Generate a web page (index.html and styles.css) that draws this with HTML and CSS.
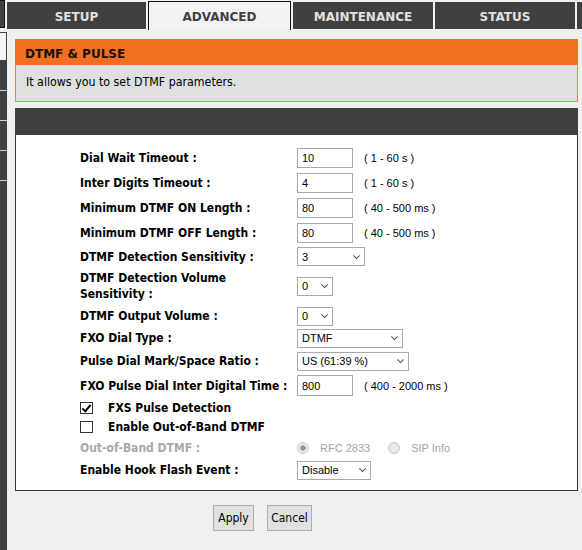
FILE: index.html
```html
<!DOCTYPE html>
<html lang="en">
<head>
  <meta charset="UTF-8">
  <title>DTMF &amp; Pulse</title>
  <link rel="stylesheet" href="styles.css">
</head>
<body>
<div class="page">
  <aside class="side">
    <div class="side-top"></div>
    <div class="side-item active"></div>
    <div class="side-item"></div>
    <div class="side-item"></div>
    <div class="side-item"></div>
    <div class="side-item"></div>
    <div class="side-rest"></div>
  </aside>

  <main class="main">
    <nav class="tabs">
      <div class="tab">SETUP</div>
      <div class="tab active">ADVANCED</div>
      <div class="tab">MAINTENANCE</div>
      <div class="tab">STATUS</div>
      <div class="tab"></div>
    </nav>

    <section class="intro">
      <h2>DTMF &amp; PULSE</h2>
      <p>It allows you to set DTMF parameters.</p>
    </section>

    <section class="box">
      <div class="box-head"></div>
      <div class="form">
        <label>Dial Wait Timeout :</label>
        <div class="ctl"><input type="text" value="10"><span class="hint">( 1 - 60 s )</span></div>

        <label>Inter Digits Timeout :</label>
        <div class="ctl"><input type="text" value="4"><span class="hint">( 1 - 60 s )</span></div>

        <label>Minimum DTMF ON Length :</label>
        <div class="ctl"><input type="text" value="80"><span class="hint">( 40 - 500 ms )</span></div>

        <label>Minimum DTMF OFF Length :</label>
        <div class="ctl"><input type="text" value="80"><span class="hint">( 40 - 500 ms )</span></div>

        <label>DTMF Detection Sensitivity :</label>
        <div class="ctl"><span class="select"><select class="sel-sens"><option>3</option></select></span></div>

        <label>DTMF Detection Volume Sensitivity :</label>
        <div class="ctl"><span class="select"><select class="sel-num"><option>0</option></select></span></div>

        <label>DTMF Output Volume :</label>
        <div class="ctl"><span class="select"><select class="sel-num"><option>0</option></select></span></div>

        <label>FXO Dial Type :</label>
        <div class="ctl"><span class="select"><select class="sel-type"><option>DTMF</option></select></span></div>

        <label>Pulse Dial Mark/Space Ratio :</label>
        <div class="ctl"><span class="select"><select class="sel-ratio"><option>US (61:39 %)</option></select></span></div>

        <label>FXO Pulse Dial Inter Digital Time :</label>
        <div class="ctl"><input type="text" value="800" class="tall"><span class="hint">( 400 - 2000 ms )</span></div>

        <div class="check"><input type="checkbox" checked><span>FXS Pulse Detection</span></div>
        <div class="check"><input type="checkbox"><span>Enable Out-of-Band DTMF</span></div>

        <label class="off">Out-of-Band DTMF :</label>
        <div class="ctl radios">
          <input type="radio" name="oob" checked disabled><span>RFC 2833</span>
          <input type="radio" name="oob" disabled><span>SIP Info</span>
        </div>

        <label>Enable Hook Flash Event :</label>
        <div class="ctl"><span class="select"><select class="sel-hook"><option>Disable</option></select></span></div>
      </div>
    </section>

    <div class="actions">
      <button class="btn-apply">Apply</button>
      <button class="btn-cancel">Cancel</button>
    </div>
  </main>
</div>
</body>
</html>
```

FILE: styles.css
```css
body { margin: 0; background: #f0f0f0; font-family: "DejaVu Sans Condensed", "Liberation Sans", sans-serif; font-size: 12px; color: #000; }
.page { display: flex; min-height: 550px; }

/* left menu strip (cut off) */
.side { width: 7px; flex-shrink: 0; display: flex; flex-direction: column; }
.side-top { width: 5px; height: 28px; margin-bottom: 4px; background: #404040; border: 1px solid #111; border-left: 0; box-sizing: border-box; }
.side-item { height: 30px; background: #404040; border-bottom: 1px solid #d4d4d4; box-sizing: border-box; }
.side-item.active { height: 29px; background: #f4f4f4; border: 1px solid #444; border-left: 0; }
.side-rest { flex: 1; background: #404040; }

.main { flex: 1; min-width: 0; }

/* top tabs */
.tabs { display: grid; grid-template-columns: 139px 143px 140px 140px 1fr; column-gap: 2px; height: 30px; }
.tab { margin-top: 2px; height: 27px; padding-top: 2px; box-sizing: border-box; background: #404040; color: #e2e2e2; font: bold 12px "DejaVu Sans", sans-serif; display: flex; align-items: center; justify-content: center; }
.tab.active { margin-top: 1px; height: 29px; background: #f3f3f3; color: #404040; border: 1px solid #111; border-bottom: 0; }

/* title block */
.intro { margin: 9px 4px 0 8px; }
.intro h2 { margin: 0; height: 26px; box-sizing: border-box; padding: 8px 10px 0; background: #f26f21; color: #1a1008; font: bold 12px/14px "DejaVu Sans", sans-serif; }
.intro p { margin: 0; height: 37px; box-sizing: border-box; padding: 10px 10px 0; background: #dfdfdf; border: 1px solid #e0875a; border-top: 0; font-size: 12.3px; line-height: 15px; }

/* settings box */
.box { margin: 6px 4px 0 8px; }
.box-head { height: 27px; background: #404040; }
.form { background: #fff; border: 1px solid #333; border-top: 0; padding: 10px 0 10px 64px; display: grid; grid-template-columns: 217px 1fr; grid-template-rows: 25px 25px 25px 25px 23px 36px 24px 20px 26px 23px 21px 18px 24px 20px; align-items: center; }
.form label { font-weight: bold; line-height: 16px; padding-right: 8px; }
.form label.off { color: #a8a8a8; }
.ctl { display: flex; align-items: center; }
.ctl input[type="text"] { width: 56px; height: 20px; box-sizing: border-box; margin: 0; padding: 0 4px; border: 1px solid #a9a9a9; font: 11px "Liberation Sans", sans-serif; color: #000; }
.ctl input.tall { height: 21px; }
.hint { margin-left: 11px; font: 11px "Liberation Sans", sans-serif; }

.select { position: relative; display: inline-flex; }
.select::after { content: ""; position: absolute; right: 6px; top: 50%; width: 4px; height: 4px; border-right: 1.5px solid #555; border-bottom: 1.5px solid #555; transform: translateY(-75%) rotate(45deg); pointer-events: none; }
.select select { appearance: none; -webkit-appearance: none; height: 19px; margin: 0; padding: 0 0 0 4px; border: 1px solid #a9a9a9; border-radius: 0; background: #fff; font: 11px "Liberation Sans", sans-serif; color: #000; }
.sel-num { width: 36px; }
.sel-sens { width: 68px; }
.sel-hook { width: 74px; }
.sel-type { width: 106px; }
.sel-ratio { width: 112px; }

.check { grid-column: 1 / -1; display: flex; align-items: center; gap: 15px; font-weight: bold; }
.check input { appearance: none; -webkit-appearance: none; width: 13px; height: 12px; margin: 0; border: 1px solid #333; background: #fff; position: relative; }
.check input:checked::after { content: ""; position: absolute; left: 3px; top: 0; width: 3px; height: 7px; border-right: 2px solid #000; border-bottom: 2px solid #000; transform: rotate(40deg); }

.radios { color: #a4a4a4; font: 11px "Liberation Sans", sans-serif; }
.radios input { appearance: none; -webkit-appearance: none; width: 12px; height: 12px; margin: 0 11px 0 0; border: 1px solid #c8c8c8; border-radius: 50%; background: #e8e8e8; }
.radios input:checked { background: radial-gradient(circle, #999 0 2.5px, #e8e8e8 3px); }
.radios span { margin-right: 18px; }

/* buttons */
.actions { margin: 14px 0 0 206px; display: flex; gap: 13px; }
.actions button { height: 26px; padding: 0; background: #e1e1e1; border: 1px solid #adadad; font: 12px "DejaVu Sans Condensed", "Liberation Sans", sans-serif; color: #000; }
.btn-apply { width: 41px; }
.btn-cancel { width: 45px; }
```
